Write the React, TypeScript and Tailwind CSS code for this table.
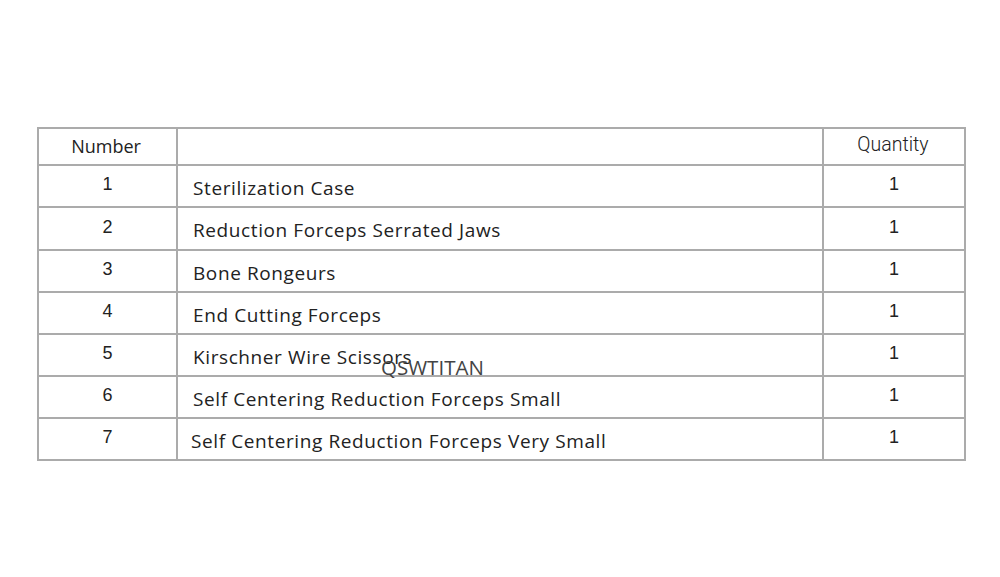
import React from 'react';

const items = [
  'Sterilization Case',
  'Reduction Forceps Serrated Jaws',
  'Bone Rongeurs',
  'End Cutting Forceps',
  'Kirschner Wire Scissors',
  'Self Centering Reduction Forceps Small',
  'Self Centering Reduction Forceps Very Small',
];

const rowHeights = ['h-[40px]', 'h-[41px]', 'h-[40px]', 'h-[40px]', 'h-[40px]', 'h-[40px]', 'h-[40px]'];

export default function App(): JSX.Element {
  return (
    <div className="w-[1000px] h-[577px] bg-white pt-[127px] pl-[37px]">
      <div className="relative w-[929px]">
        <div className="grid grid-cols-[137px_644px_140px] gap-[2px] p-[2px] bg-[#ababab]">
          {/* header */}
          <div className="h-[35px] bg-white flex items-center justify-center pr-[3px] text-[18px] text-[#222] font-['Open_Sans',sans-serif]">
            Number
          </div>
          <div className="h-[35px] bg-white" />
          <div className="h-[35px] bg-white flex items-center justify-center pb-[3px] pr-[2px] text-[19.5px] font-light text-[#222] font-['Roboto',sans-serif]">
            Quantity
          </div>

          {items.map((name, i) => (
            <React.Fragment key={name}>
              <div className={`${rowHeights[i]} bg-white flex items-center justify-center pb-[3px] text-[18px] text-[#222] font-['Liberation_Sans',Arial,sans-serif]`}>
                {i + 1}
              </div>
              <div className={`${rowHeights[i]} bg-white flex items-center pt-[4px] ${i === 6 ? 'pl-[13px]' : 'pl-[15px]'} text-[19px] tracking-[0.6px] text-[#222] font-['Open_Sans',sans-serif]`}>
                {name}
              </div>
              <div className={`${rowHeights[i]} bg-white flex items-center justify-center pb-[3px] text-[18px] text-[#222] font-['Liberation_Sans',Arial,sans-serif]`}>
                1
              </div>
            </React.Fragment>
          ))}
        </div>

        {/* watermark */}
        <div className="absolute left-[344px] top-[230px] text-[20.5px] leading-none text-[#444] font-['Open_Sans',sans-serif] pointer-events-none">
          QSWTITAN
        </div>
      </div>
    </div>
  );
}
